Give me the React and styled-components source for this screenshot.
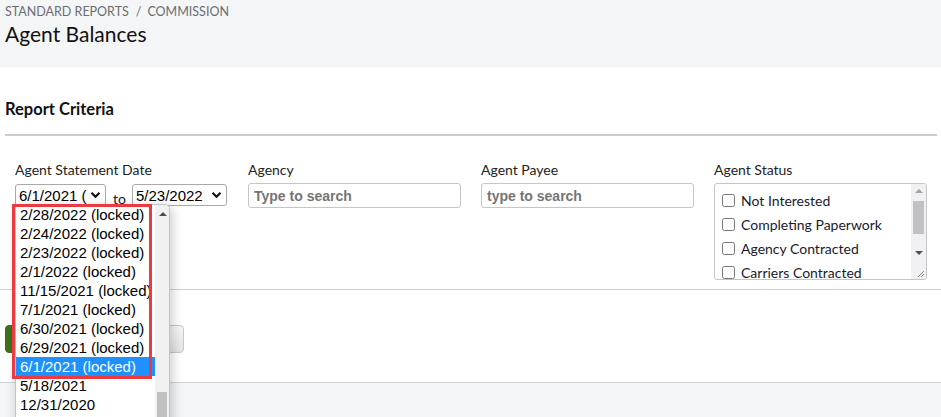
import React from "react";
import styled, { createGlobalStyle } from "styled-components";

const GlobalStyle = createGlobalStyle`
  html, body {
    margin: 0;
    padding: 0;
    background: #fff;
    overflow: hidden;
  }
  body {
    font-family: Lato, "Open Sans", sans-serif;
    color: #1a1a1a;
  }
`;

const Page = styled.div`
  position: relative;
  width: 941px;
  height: 417px;
  overflow: hidden;
`;

const Header = styled.div`
  background: #f4f5f7;
  height: 67px;
  padding: 4px 5px 0;
  box-sizing: border-box;
`;

const Crumbs = styled.div`
  font-size: 12.5px;
  color: #6a6d72;
  line-height: 16px;
  span {
    margin: 0 6px 0 7px;
  }
`;

const Title = styled.h1`
  margin: 1px 0 0;
  font-size: 21px;
  font-weight: 400;
  line-height: 26px;
  color: #111;
`;

const Section = styled.div`
  padding: 31px 4px 0 5px;
`;

const SectionTitle = styled.h2`
  margin: 0;
  font-size: 16.5px;
  font-weight: 700;
  line-height: 22px;
  color: #111;
`;

const Rule = styled.div`
  height: 2px;
  background: #c9ccd0;
  margin-top: 14px;
`;

const Criteria = styled.div`
  display: grid;
  grid-template-columns: 233px 233px 233px 214px;
  padding: 25px 0 0 15px;
  height: 153px;
  box-sizing: border-box;
`;

const Field = styled.div`
  display: flex;
  flex-direction: column;
`;

const Label = styled.label`
  font-size: 14px;
  line-height: 18px;
  color: #222;
  margin-bottom: 4px;
`;

const DateRow = styled.div`
  display: flex;
  align-items: flex-start;
  padding-top: 1px;
`;

const Select = styled.div`
  display: flex;
  align-items: center;
  width: ${(p) => p.$w}px;
  height: 22px;
  box-sizing: border-box;
  border: 1px solid #a9a9a9;
  border-radius: 3px;
  padding: 0 4px 0 3px;
  font-family: "Liberation Sans", Arial, sans-serif;
  font-size: 15px;
  color: #000;
  background: #fff;
  span {
    flex: 1;
    overflow: hidden;
    white-space: nowrap;
    margin-right: 3px;
  }
`;

const To = styled.span`
  font-size: 14px;
  margin: 6px 6px 0 7px;
  color: #222;
`;

const TextInput = styled.input`
  width: 213px;
  height: 25px;
  box-sizing: border-box;
  border: 1px solid #c3c6ca;
  border-radius: 3px;
  padding: 0 5px;
  font-family: "Liberation Sans", Arial, sans-serif;
  font-size: 14px;
  &::placeholder {
    color: #757575;
    font-weight: 700;
  }
`;

const StatusBox = styled.div`
  position: relative;
  width: 213px;
  height: 97px;
  box-sizing: border-box;
  border: 1px solid #c3c6ca;
  border-radius: 3px;
  overflow: hidden;
  padding: 4px 0 0 7px;
`;

const StatusItem = styled.div`
  display: flex;
  align-items: center;
  height: 24px;
  font-size: 14px;
  color: #1a1a2e;
  input {
    width: 13px;
    height: 13px;
    margin: 0 6px 0 0;
  }
`;

const Scrollbar = styled.div`
  position: absolute;
  top: 0;
  right: 0;
  bottom: 0;
  width: 15px;
  background: #f1f1f1;
`;

const Thumb = styled.div`
  position: absolute;
  left: 2px;
  right: 2px;
  top: ${(p) => p.$top}px;
  height: ${(p) => p.$h}px;
  background: #c1c1c1;
`;

const Arrow = styled.div`
  position: absolute;
  left: 4px;
  width: 0;
  height: 0;
  border-left: 4px solid transparent;
  border-right: 4px solid transparent;
  ${(p) =>
    p.$up
      ? `top: ${p.$at}px; border-bottom: 4px solid ${p.$c || "#a3a3a3"};`
      : `top: ${p.$at}px; border-top: 4px solid ${p.$c || "#505050"};`}
`;

const Grip = styled.svg`
  position: absolute;
  right: 1px;
  bottom: 1px;
`;

const Divider = styled.div`
  height: 1px;
  background: #cfd1d4;
`;

const Actions = styled.div`
  display: flex;
  gap: 6px;
  height: 92px;
  align-items: center;
  padding: 6px 0 0 5px;
  box-sizing: border-box;
`;

const Button = styled.button`
  height: 28px;
  padding: 0 ${(p) => (p.$primary ? 14 : 19)}px;
  border-radius: 4px;
  font-family: Lato, sans-serif;
  font-size: 14px;
  border: 1px solid ${(p) => (p.$primary ? "#3b6b17" : "#c6c8cb")};
  background: ${(p) =>
    p.$primary ? "#3f7218" : "linear-gradient(#f6f6f6, #e3e4e6)"};
  color: ${(p) => (p.$primary ? "#fff" : "#333")};
`;

const Footer = styled.div`
  background: #f4f5f7;
  height: 60px;
`;

const Dropdown = styled.div`
  position: absolute;
  left: 15px;
  top: 204px;
  width: 155px;
  height: 230px;
  background: #fff;
  border: 1px solid #c4c4c4;
  border-radius: 0 5px 0 0;
  box-shadow: 2px 3px 12px rgba(0, 0, 0, 0.22);
  box-sizing: border-box;
  overflow: hidden;
`;

const Option = styled.div`
  height: 19px;
  line-height: 19px;
  padding-left: 4px;
  width: 137px;
  font-family: "Liberation Sans", Arial, sans-serif;
  font-size: 15px;
  white-space: nowrap;
  background: ${(p) => (p.$active ? "#1e90ff" : "transparent")};
  color: ${(p) => (p.$active ? "#fff" : "#000")};
`;

const DropScroll = styled(Scrollbar)`
  width: 14px;
`;

const Highlight = styled.div`
  position: absolute;
  left: 12px;
  top: 204px;
  width: 140px;
  height: 175px;
  border: 3px solid #ec3b40;
  box-sizing: border-box;
  pointer-events: none;
`;

const Chevron = () => (
  <svg width="11" height="8" viewBox="0 0 11 8">
    <path d="M1.5 1.8 L5.5 5.8 L9.5 1.8" fill="none" stroke="#111" strokeWidth="2.2" />
  </svg>
);

const statuses = ["Not Interested", "Completing Paperwork", "Agency Contracted", "Carriers Contracted"];

const dates = [
  "2/28/2022 (locked)",
  "2/24/2022 (locked)",
  "2/23/2022 (locked)",
  "2/1/2022 (locked)",
  "11/15/2021 (locked)",
  "7/1/2021 (locked)",
  "6/30/2021 (locked)",
  "6/29/2021 (locked)",
  "6/1/2021 (locked)",
  "5/18/2021",
  "12/31/2020",
];

export default function App() {
  return (
    <Page>
      <GlobalStyle />
      <Header>
        <Crumbs>
          STANDARD REPORTS<span>/</span>COMMISSION
        </Crumbs>
        <Title>Agent Balances</Title>
      </Header>
      <Section>
        <SectionTitle>Report Criteria</SectionTitle>
        <Rule />
      </Section>
      <Criteria>
        <Field>
          <Label>Agent Statement Date</Label>
          <DateRow>
            <Select $w={91}>
              <span>6/1/2021 (locked)</span>
              <Chevron />
            </Select>
            <To>to</To>
            <Select $w={95}>
              <span>5/23/2022</span>
              <Chevron />
            </Select>
          </DateRow>
        </Field>
        <Field>
          <Label>Agency</Label>
          <TextInput placeholder="Type to search" />
        </Field>
        <Field>
          <Label>Agent Payee</Label>
          <TextInput placeholder="type to search" />
        </Field>
        <Field>
          <Label>Agent Status</Label>
          <StatusBox>
            {statuses.map((s) => (
              <StatusItem key={s}>
                <input type="checkbox" />
                {s}
              </StatusItem>
            ))}
            <Scrollbar>
              <Arrow $up $at={5} />
              <Thumb $top={17} $h={33} />
              <Arrow $at={67} />
            </Scrollbar>
            <Grip width="10" height="10" viewBox="0 0 10 10">
              <path d="M9 3 L3 9 M9 6 L6 9" stroke="#888" strokeWidth="1" />
            </Grip>
          </StatusBox>
        </Field>
      </Criteria>
      <Divider />
      <Actions>
        <Button $primary>Run Report</Button>
        <Button>Reset</Button>
      </Actions>
      <Divider />
      <Footer />
      <Dropdown>
        {dates.map((d, i) => (
          <Option key={d} $active={i === 8}>
            {d}
          </Option>
        ))}
        <DropScroll>
          <Arrow $up $at={7} $c="#505050" />
          <Thumb $top={187} $h={40} />
        </DropScroll>
      </Dropdown>
      <Highlight />
    </Page>
  );
}
